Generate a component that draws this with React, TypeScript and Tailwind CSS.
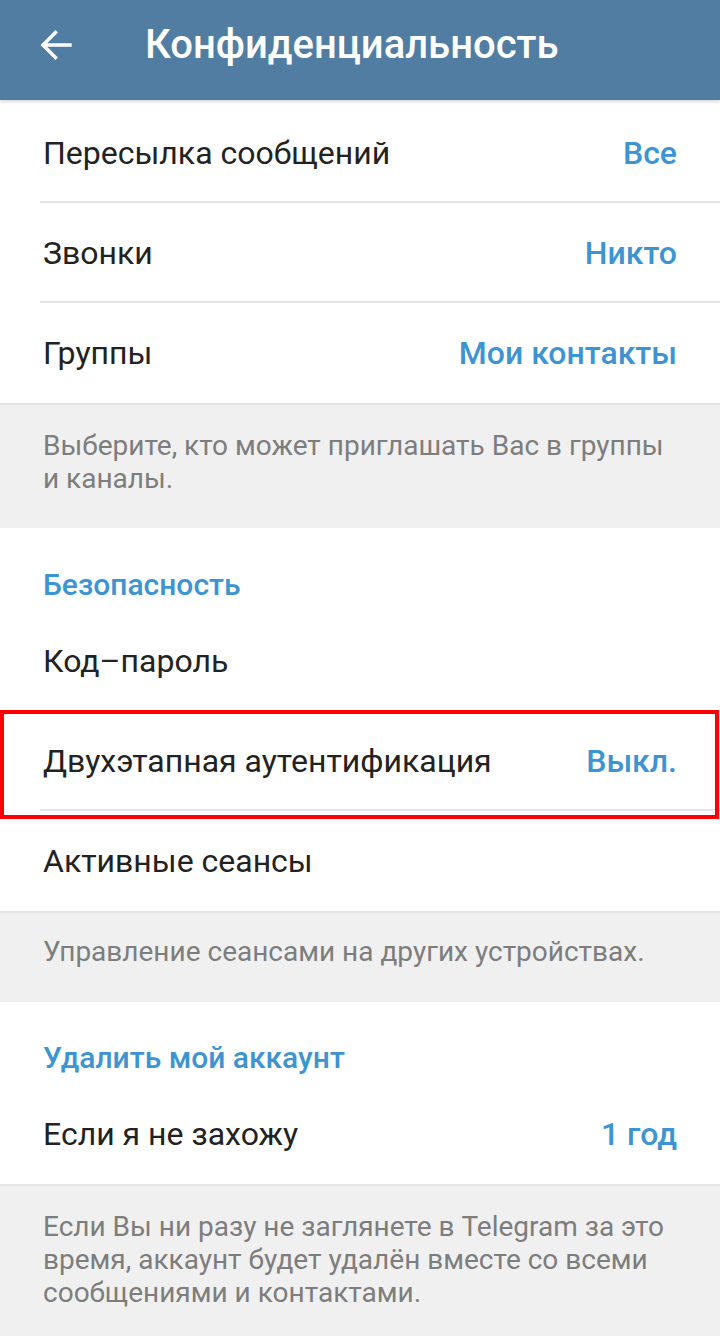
import React from "react";

type RowProps = { label: string; value?: string; divider?: boolean };

function Row({ label, value, divider }: RowProps) {
  return (
    <div className="relative h-[100px] flex items-center justify-between pl-[43px] pr-[43px]">
      <span className="text-[32px] text-[#222222]">{label}</span>
      {value && <span className="text-[32px] font-medium text-[#3d94d3]">{value}</span>}
      {divider && <div className="absolute left-[40px] right-0 bottom-0 h-[2px] bg-[#e3e3e3]" />}
    </div>
  );
}

function Note({ children, className }: { children: React.ReactNode; className: string }) {
  return (
    <div className={"bg-[#f0f0f0] border-t-2 border-[#e5e5e5] px-[43px] text-[28px] leading-[33px] text-[#7d7d7d] whitespace-nowrap " + className}>
      {children}
    </div>
  );
}

function SectionTitle({ text, className }: { text: string; className: string }) {
  return <div className={"px-[43px] text-[30px] leading-[40px] font-medium text-[#3d94d3] " + className}>{text}</div>;
}

export default function App() {
  return (
    <div className="w-[720px] h-[1336px] bg-white overflow-hidden" style={{ fontFamily: "Roboto, 'Noto Sans', sans-serif" }}>
      <div className="h-[100px] bg-[#527da3] flex items-center pb-[10px] shadow-[0_2px_3px_rgba(0,0,0,0.15)] relative z-10">
        <svg className="ml-[40px] w-[32px] h-[32px]" viewBox="0 0 32 32" fill="none" stroke="white" strokeWidth="3.4" strokeLinecap="square">
          <path d="M30 16H3.5M15.5 3.5L3 16l12.5 12.5" />
        </svg>
        <h1 className="ml-[73px] text-[40px] font-medium text-white">Конфиденциальность</h1>
      </div>

      <div className="bg-white pt-[3px]">
        <Row label="Пересылка сообщений" value="Все" divider />
        <Row label="Звонки" value="Никто" divider />
        <Row label="Группы" value="Мои контакты" />
      </div>

      <Note className="h-[125px] pt-[24px]">
        Выберите, кто может приглашать Вас в группы
        <br />и каналы.
      </Note>

      <div className="bg-white">
        <SectionTitle text="Безопасность" className="pt-[37px] h-[83px]" />
        <Row label="Код–пароль" />
        <div className="relative">
          <Row label="Двухэтапная аутентификация" value="Выкл." divider />
          <div className="absolute left-0 right-[1px] top-[-1px] bottom-[-8px] border-[4px] border-[#ff0000] pointer-events-none" />
        </div>
        <Row label="Активные сеансы" />
      </div>

      <Note className="h-[91px] pt-[22px]">Управление сеансами на других устройствах.</Note>

      <div className="bg-white">
        <SectionTitle text="Удалить мой аккаунт" className="pt-[36px] h-[82px]" />
        <Row label="Если я не захожу" value="1 год" />
      </div>

      <Note className="h-[153px] pt-[24px]">
        Если Вы ни разу не заглянете в Telegram за это
        <br />
        время, аккаунт будет удалён вместе со всеми
        <br />
        сообщениями и контактами.
      </Note>
    </div>
  );
}
